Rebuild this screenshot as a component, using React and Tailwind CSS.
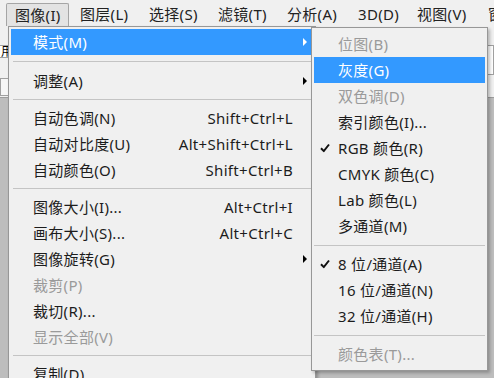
import React from 'react';

const barItems = [
  { label: '图像(I)', w: 'w-[63px] mr-[2px]' },
  { label: '图层(L)', w: 'w-[69px]' },
  { label: '选择(S)', w: 'w-[69px]' },
  { label: '滤镜(T)', w: 'w-[69px]' },
  { label: '分析(A)', w: 'w-[71px]' },
  { label: '3D(D)', w: 'w-[59px]' },
  { label: '视图(V)', w: 'w-[71px]' },
  { label: '窗口(W)', w: 'w-[71px]' },
];

const mainItems = [
  { label: '模式(M)', sub: true, active: true },
  { sep: 'h-[13px]' },
  { label: '调整(A)', sub: true },
  { sep: 'h-[11px]' },
  { label: '自动色调(N)', keys: 'Shift+Ctrl+L' },
  { label: '自动对比度(U)', keys: 'Alt+Shift+Ctrl+L' },
  { label: '自动颜色(O)', keys: 'Shift+Ctrl+B' },
  { sep: 'h-[11px]' },
  { label: '图像大小(I)...', keys: 'Alt+Ctrl+I' },
  { label: '画布大小(S)...', keys: 'Alt+Ctrl+C' },
  { label: '图像旋转(G)', sub: true },
  { label: '裁剪(P)', disabled: true },
  { label: '裁切(R)...' },
  { label: '显示全部(V)', disabled: true },
  { sep: 'h-[11px]' },
  { label: '复制(D)...' },
];

const modeItems = [
  { label: '位图(B)', disabled: true },
  { label: '灰度(G)', active: true },
  { label: '双色调(D)', disabled: true },
  { label: '索引颜色(I)...' },
  { label: 'RGB 颜色(R)', checked: true },
  { label: 'CMYK 颜色(C)' },
  { label: 'Lab 颜色(L)' },
  { label: '多通道(M)' },
  { sep: true },
  { label: '8 位/通道(A)', checked: true },
  { label: '16 位/通道(N)' },
  { label: '32 位/通道(H)' },
  { sep: true },
  { label: '颜色表(T)...', disabled: true },
];

const Arrow = ({ white }) => (
  <span
    className={`absolute right-[6px] top-1/2 -translate-y-1/2 w-0 h-0 border-y-[4px] border-y-transparent border-l-[4px] ${
      white ? 'border-l-white' : 'border-l-black'
    }`}
  />
);

const Check = () => (
  <svg className="absolute left-[6px] top-1/2 -translate-y-1/2" width="10" height="9" viewBox="0 0 10 9">
    <path d="M1 4.8 L3.8 7.6 L9 1" fill="none" stroke="#111" strokeWidth="2" />
  </svg>
);

const textColor = (item) =>
  item.active ? 'text-white' : item.disabled ? 'text-[#9a9a9a]' : 'text-[#1c1c1c]';

export default function App() {
  return (
    <div className="relative w-[494px] h-[378px] overflow-hidden bg-[#bdbdbd] font-['Noto_Sans','Noto_Sans_CJK_SC',sans-serif] text-[15px] tracking-[0.3px] leading-none select-none">
      {/* menu bar */}
      <div className="flex h-[27px] items-start bg-[#f0f0f0] pl-[6px] pt-[3px] whitespace-nowrap">
        {barItems.map((b, i) => (
          <div
            key={b.label}
            className={`${b.w} shrink-0 h-[23px] flex items-center pl-[8px] text-[#222] ${
              i === 0 ? 'bg-[#e3e3e3] border border-b-0 border-[#a5a5a5] rounded-t-[2px]' : 'border border-transparent'
            }`}
          >
            {b.label}
          </div>
        ))}
      </div>

      {/* options bar behind the menus */}
      <div className="h-[71px] bg-[#f0f0f0] border-b border-[#9c9c9c] flex flex-col pt-[18px]">
        <div className="flex justify-between">
          <div className="w-[30px] h-[13px] bg-white border-y border-[#a0a0a0] text-[12px] text-black leading-[12px] pl-[1px]">用</div>
          <div className="w-[30px] h-[30px] bg-white border border-[#a0a0a0] text-[12px] text-[#555] pl-[2px] pt-[4px]">H</div>
        </div>
        <div className="mt-[3px] w-[14px] h-[18px] border border-[#a0a0a0] bg-[#f6f6f6]" />
      </div>

      {/* image menu */}
      <div className="absolute left-[8px] top-[26px] w-[308px] h-[360px] bg-[#f0f0f0] border border-[#979797] px-[2px] pt-[2px] shadow-[2px_2px_3px_rgba(0,0,0,0.25)]">
        {mainItems.map((item, i) =>
          item.sep ? (
            <div key={i} className={`${item.sep} flex items-center`}>
              <div className="w-full ml-[2px] h-px bg-[#c4c4c4]" />
            </div>
          ) : (
            <div
              key={i}
              className={`relative h-[26px] flex items-center justify-between pl-[22px] pr-[20px] ${
                item.active ? 'bg-[#3399ff]' : ''
              } ${textColor(item)}`}
            >
              <span>{item.label}</span>
              {item.keys && <span>{item.keys}</span>}
              {item.sub && <Arrow white={item.active} />}
            </div>
          )
        )}
      </div>

      {/* mode submenu */}
      <div className="absolute left-[311px] top-[27px] w-[177px] bg-[#f0f0f0] border border-[#979797] px-[2px] pt-[3px] pb-[3px] shadow-[2px_2px_3px_rgba(0,0,0,0.25)]">
        {modeItems.map((item, i) =>
          item.sep ? (
            <div key={i} className="h-[12px] flex items-center">
              <div className="w-full h-px bg-[#c4c4c4]" />
            </div>
          ) : (
            <div
              key={i}
              className={`relative h-[26px] flex items-center pl-[24px] ${
                item.active ? 'bg-[#3399ff]' : ''
              } ${textColor(item)}`}
            >
              {item.checked && <Check />}
              <span>{item.label}</span>
            </div>
          )
        )}
      </div>
    </div>
  );
}
